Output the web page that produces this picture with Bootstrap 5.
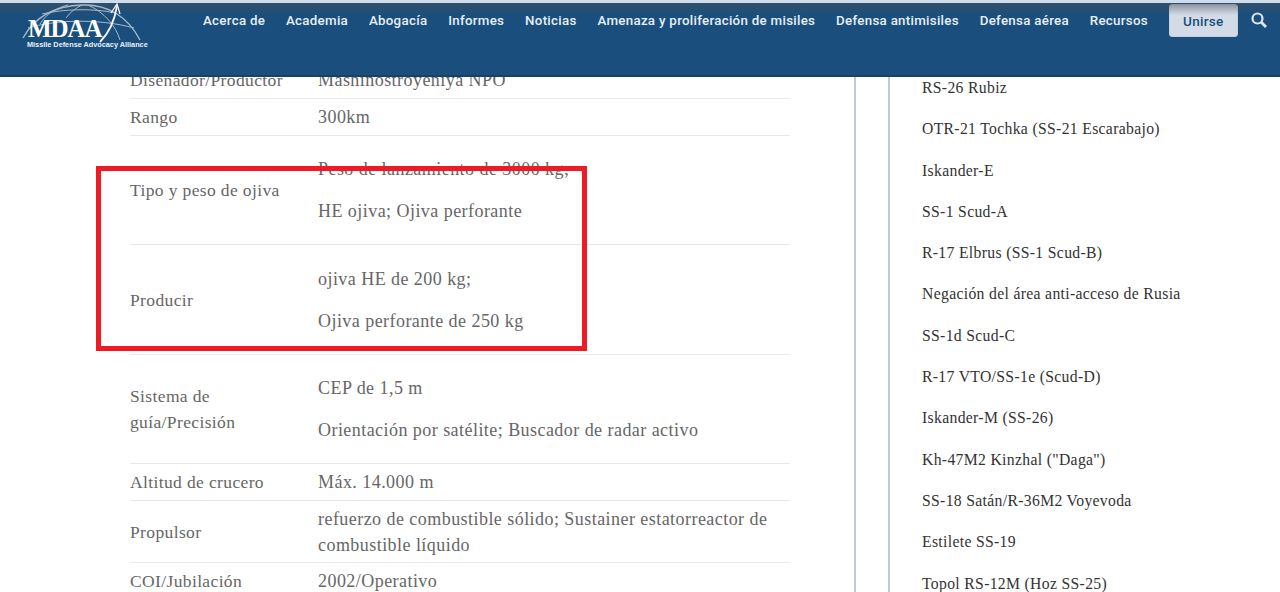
<!DOCTYPE html>
<html lang="es">
<head>
<meta charset="utf-8">
<title>MDAA</title>
<link href="https://cdn.jsdelivr.net/npm/bootstrap@5.3.0/dist/css/bootstrap.min.css" rel="stylesheet">
<style>
html,body{height:592px;overflow:hidden;background:#fff}
body{font-family:"Liberation Serif",serif;color:#666}
.top-bar{position:fixed;top:0;left:0;right:0;height:77px;z-index:10;background:#1a4f7d;border-top:3px solid #cfdcec;border-bottom:2px solid #164268;align-items:flex-start}
.top-shade{position:absolute;left:0;right:0;top:0;height:12px;background:linear-gradient(rgba(70,80,90,.55),rgba(70,80,90,0))}
.brand-box{position:relative;width:203px;height:60px;flex:none}
.brand-box svg{position:absolute;left:20px;top:-3px}
.brand-name{position:absolute;left:28px;top:16px;font:700 25px/20px "Liberation Serif",serif;color:#fff;letter-spacing:-1.1px}
.brand-sub{position:absolute;left:27px;top:37px;font:700 7.3px/10px "Liberation Sans",sans-serif;color:#eaf0f6;white-space:nowrap}
.menu-row{gap:20.8px;font:500 13.3px/20px Roboto,sans-serif;letter-spacing:.3px;padding-top:8px;white-space:nowrap}
.menu-row a{color:#e8eef4;text-decoration:none}
.join-btn{margin-left:21px;margin-top:1px;width:69px;height:33px;padding:0;background:#d3dce6;border:1px solid #c5d0dc;border-radius:3px;color:#1a4f7d;font:500 13.5px Roboto,sans-serif;letter-spacing:.3px}
.find-icon{margin-left:13px;margin-top:9px;flex:none}
.page-flow{padding-top:62px}
.main-col{width:856px;flex:none;padding:0 65px 0 130px;border-right:2px solid #b9cbdd}
.data-table{width:660px;table-layout:fixed;margin:0;font-size:18px;letter-spacing:.45px}
.data-table td{padding:5px 0;line-height:26px;vertical-align:middle;border-bottom:1px solid #e9e9e9;color:#666;background:none;box-shadow:none}
.data-table td:first-child{width:188px;padding-right:16px;font-size:17.5px;letter-spacing:.37px}
.data-table p{margin:0;padding:15px 0 0}
.data-table p+p{padding:16px 0 15px}
.data-table .row-extra p:first-child{padding-top:16px}
.data-table .row-short td{padding-bottom:4px}
.side-col{margin-left:32px;padding:14px 0 0 32px;border-left:2px solid #b9cbdd;flex:1;height:560px}
.side-list{font-size:15.7px;line-height:24px;letter-spacing:.33px;color:#333}
.side-list li{margin-bottom:17.3px;white-space:nowrap}
.red-frame{position:absolute;left:96px;top:166px;width:491px;height:185px;border:5px solid #ed1c24;z-index:5}
</style>
</head>
<body>
<nav class="top-bar d-flex">
  <span class="top-shade"></span>
  <div class="brand-box">
    <svg width="125" height="46" viewBox="0 0 125 46" fill="none" stroke="#a9b9c8" stroke-width="1">
      <path d="M3 38C14 18 34 6 62 5c26-1 46 12 58 35" stroke-width="1.4"/>
      <path d="M8 28c26-8 70-10 106 0"/>
      <path d="M22 14c22-5 50-6 74-1"/>
      <path d="M20 24C26 14 36 8 48 5"/>
      <path d="M46 18C50 12 56 8 62 5"/>
      <path d="M100 40C96 26 84 12 68 5"/>
      <path d="M80 42C90 32 95 18 97 6" stroke="#f2f5f8" stroke-width="1.8"/>
      <path d="M91 13l6-9 3 10" stroke="#f2f5f8" stroke-width="1.3"/>
    </svg>
    <span class="brand-name">MDAA</span>
    <span class="brand-sub">Missile Defense Advocacy Alliance</span>
  </div>
  <div class="menu-row d-flex">
    <a href="#">Acerca de</a><a href="#">Academia</a><a href="#">Abogacía</a><a href="#">Informes</a><a href="#">Noticias</a><a href="#">Amenaza y proliferación de misiles</a><a href="#">Defensa antimisiles</a><a href="#">Defensa aérea</a><a href="#">Recursos</a>
  </div>
  <button class="btn join-btn" type="button">Unirse</button>
  <svg class="find-icon" width="16" height="16" viewBox="0 0 16 16" fill="none" stroke="#dfe7ef" stroke-width="2.2"><circle cx="6.5" cy="6.5" r="5"/><path d="M10.3 10.3L15 15" stroke-width="2.8"/></svg>
</nav>

<div class="page-flow d-flex">
  <main class="main-col">
    <table class="table data-table">
      <tbody>
        <tr><td>Diseñador/Productor</td><td>Mashinostroyeniya NPO</td></tr>
        <tr><td>Rango</td><td>300km</td></tr>
        <tr><td>Tipo y peso de ojiva</td><td><p>Peso de lanzamiento de 3000 kg;</p><p>HE ojiva; Ojiva perforante</p></td></tr>
        <tr class="row-extra"><td>Producir</td><td><p>ojiva HE de 200 kg;</p><p>Ojiva perforante de 250 kg</p></td></tr>
        <tr><td>Sistema de guía/Precisión</td><td><p>CEP de 1,5 m</p><p>Orientación por satélite; Buscador de radar activo</p></td></tr>
        <tr><td>Altitud de crucero</td><td>Máx. 14.000 m</td></tr>
        <tr class="row-short"><td>Propulsor</td><td>refuerzo de combustible sólido; Sustainer estatorreactor de combustible líquido</td></tr>
        <tr><td>COI/Jubilación</td><td>2002/Operativo</td></tr>
      </tbody>
    </table>
  </main>
  <aside class="side-col">
    <ul class="list-unstyled side-list">
      <li>RS-26 Rubiz</li>
      <li>OTR-21 Tochka (SS-21 Escarabajo)</li>
      <li>Iskander-E</li>
      <li>SS-1 Scud-A</li>
      <li>R-17 Elbrus (SS-1 Scud-B)</li>
      <li>Negación del área anti-acceso de Rusia</li>
      <li>SS-1d Scud-C</li>
      <li>R-17 VTO/SS-1e (Scud-D)</li>
      <li>Iskander-M (SS-26)</li>
      <li>Kh-47M2 Kinzhal ("Daga")</li>
      <li>SS-18 Satán/R-36M2 Voyevoda</li>
      <li>Estilete SS-19</li>
      <li>Topol RS-12M (Hoz SS-25)</li>
    </ul>
  </aside>
</div>
<div class="red-frame"></div>
<script src="https://cdn.jsdelivr.net/npm/bootstrap@5.3.0/dist/js/bootstrap.bundle.min.js"></script>
</body>
</html>
